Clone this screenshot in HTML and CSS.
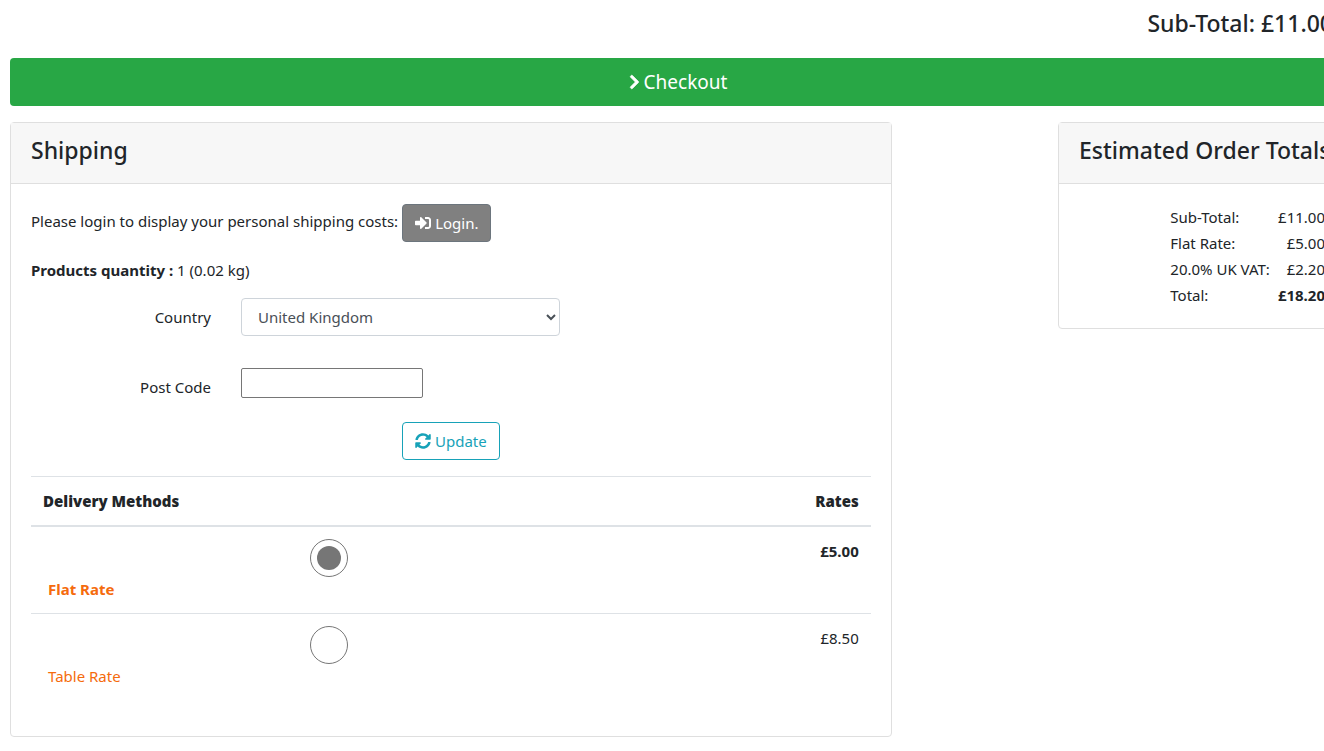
FILE: index.html
```
<!DOCTYPE html>
<html lang="en">
<head>
    <meta charset="utf-8">
    <title>Shopping Cart</title>
    <link rel="stylesheet" href="styles.css">
</head>
<body>
    <div class="cart">
        <h4 class="subtotal">Sub-Total: £11.00</h4>
        <a href="#checkout" class="btn btn-success">
            <svg class="icon" width="11" height="16" viewBox="0 0 320 512" aria-hidden="true"><path fill="currentColor" stroke="currentColor" stroke-width="24" d="M285.476 272.971L91.132 467.314c-9.373 9.373-24.569 9.373-33.941 0l-22.667-22.667c-9.357-9.357-9.375-24.522-.04-33.901L188.505 256 34.484 101.255c-9.335-9.379-9.317-24.544.04-33.901l22.667-22.667c9.373-9.373 24.569-9.373 33.941 0L285.475 239.03c9.373 9.372 9.373 24.568.001 33.941z"/></svg>
            Checkout
        </a>

        <div class="row">
            <!-- Shipping estimator -->
            <div class="card shipping">
                <div class="card-header"><h4>Shipping</h4></div>
                <div class="card-body">
                    <div class="login">
                        <span>Please login to display your personal shipping costs:</span>
                        <a href="#login" class="btn btn-secondary">
                            <svg class="icon" width="16" height="16" viewBox="0 0 512 512" aria-hidden="true"><path fill="currentColor" d="M416 448h-84c-6.600 0-12-5.400-12-12v-40c0-6.600 5.400-12 12-12h84c17.700 0 32-14.300 32-32V160c0-17.700-14.300-32-32-32h-84c-6.600 0-12-5.400-12-12V76c0-6.600 5.400-12 12-12h84c53 0 96 43 96 96v192c0 53-43 96-96 96zm-47-209L201 71c-15-15-41-4.500-41 17v96H24c-13.300 0-24 10.700-24 24v96c0 13.300 10.700 24 24 24h136v96c0 21.500 26 32 41 17l168-168c9.300-9.400 9.300-24.600 0-34z"/></svg>
                            Login.
                        </a>
                    </div>
                    <p class="quantity"><strong>Products quantity :</strong> 1 (0.02 kg)</p>

                    <form class="estimator">
                        <div class="form-row">
                            <label for="country">Country</label>
                            <select id="country" name="country" class="form-control">
                                <option selected>United Kingdom</option>
                            </select>
                        </div>
                        <div class="form-row">
                            <label for="postcode">Post Code</label>
                            <input type="text" id="postcode" name="postcode" class="postcode">
                        </div>
                        <button type="button" class="btn btn-info">
                            <svg class="icon" width="16" height="16" viewBox="0 0 512 512" aria-hidden="true"><path fill="currentColor" d="M370.720 133.280C339.458 104.008 298.888 87.962 255.848 88c-77.458.068-144.328 53.178-162.791 126.850-1.344 5.363-6.122 9.150-11.651 9.150H24.103c-7.498 0-13.194-6.807-11.807-14.176C33.933 94.924 134.813 8 256 8c66.448 0 126.791 26.136 171.315 68.685L463.030 40.970C478.149 25.851 504 36.559 504 57.941V192c0 13.255-10.745 24-24 24H345.941c-21.382 0-32.090-25.851-16.971-40.971l41.750-41.749zM32 296h134.059c21.382 0 32.090 25.851 16.971 40.971l-41.750 41.750c31.262 29.273 71.835 45.319 114.876 45.280 77.418-.07 144.315-53.144 162.787-126.849 1.344-5.363 6.122-9.150 11.651-9.150h57.304c7.498 0 13.194 6.807 11.807 14.176C478.067 417.076 377.187 504 256 504c-66.448 0-126.791-26.136-171.315-68.685L48.970 471.030C33.851 486.149 8 475.441 8 454.059V320c0-13.255 10.745-24 24-24z"/></svg>
                            Update
                        </button>
                    </form>

                    <table class="methods">
                        <thead>
                            <tr><th scope="col">Delivery Methods</th><th scope="col">Rates</th></tr>
                        </thead>
                        <tbody>
                            <tr class="selected">
                                <td>
                                    <input type="radio" id="flat" name="method" checked>
                                    <label for="flat">Flat Rate</label>
                                </td>
                                <td>£5.00</td>
                            </tr>
                            <tr>
                                <td>
                                    <input type="radio" id="table" name="method">
                                    <label for="table">Table Rate</label>
                                </td>
                                <td>£8.50</td>
                            </tr>
                        </tbody>
                    </table>
                </div>
            </div>

            <!-- Order totals -->
            <div class="card totals">
                <div class="card-header"><h4>Estimated Order Totals</h4></div>
                <div class="card-body">
                    <table>
                        <tr><td>Sub-Total:</td><td>£11.00</td></tr>
                        <tr><td>Flat Rate:</td><td>£5.00</td></tr>
                        <tr><td>20.0% UK VAT:</td><td>£2.20</td></tr>
                        <tr><td>Total:</td><td><strong>£18.20</strong></td></tr>
                    </table>
                </div>
            </div>
        </div>
    </div>
</body>
</html>
```
FILE: styles.css
```
* {
    box-sizing: border-box;
}

body {
    margin: 0;
    font-family: "Noto Sans", "Open Sans", sans-serif;
    font-size: 15px;
    line-height: 24px;
    color: #212529;
    background-color: #fff;
    overflow-x: hidden;
}

/* The cart is a little wider than the window and runs off to the right */
.cart {
    margin: 0 -22px 0 10px;
    padding-top: 9px;
}

h4 {
    margin: 0 0 8px;
    font-size: 23px;
    font-weight: 500;
    line-height: 29px;
    white-space: nowrap;
}

.subtotal {
    margin: 0 13px 20px;
    text-align: right;
}

.icon {
    flex: none;
}

.btn {
    display: inline-flex;
    align-items: center;
    justify-content: center;
    gap: 4px;
    height: 38px;
    padding: 0 12px;
    border: 1px solid transparent;
    border-radius: 4px;
    font-family: inherit;
    font-size: 15px;
    text-decoration: none;
    cursor: pointer;
}

.btn-success {
    display: flex;
    height: 48px;
    margin-bottom: 16px;
    color: #fff;
    background-color: #28a745;
    font-size: 19px;
}

.btn-secondary {
    color: #fff;
    background-color: #808080;
    border-color: #6c757d;
}

.btn-info {
    color: #17a2b8;
    background-color: #fff;
    border-color: #17a2b8;
}

.row {
    display: flex;
    align-items: flex-start;
    justify-content: space-between;
}

.card {
    border: 1px solid #dfdfdf;
    border-radius: 4px;
}

.card-header {
    padding: 13px 20px 10px;
    background-color: #f7f7f7;
    border-bottom: 1px solid #dfdfdf;
}

.card-body {
    padding: 20px;
}

.shipping {
    width: 66%;
}

.totals {
    width: 288px;
}

.login {
    display: flex;
    gap: 4px;
}

.login span {
    padding-top: 5px;
}

.quantity {
    margin: 16px 0;
}

.form-row {
    display: grid;
    grid-template-columns: 180px 38%;
    column-gap: 30px;
    align-items: start;
    margin-bottom: 32px;
}

.form-row label {
    padding-top: 7px;
    text-align: right;
}

.form-control {
    height: 38px;
    padding: 6px 12px;
    border: 1px solid #ced4da;
    border-radius: 4px;
    color: #495057;
    background-color: #fff;
    font-family: inherit;
    font-size: 15px;
}

.postcode {
    width: 182px;
    height: 30px;
    border: 1px solid #767676;
    border-radius: 2px;
    font-family: inherit;
    font-size: 15px;
}

.estimator {
    text-align: center;
    margin-bottom: 16px;
}

.estimator .form-row:nth-child(2) {
    margin-bottom: 23px;
}

.estimator .btn {
    vertical-align: top;
}

.methods {
    width: 100%;
    margin-bottom: 16px;
    border-collapse: collapse;
}

.methods th,
.methods td {
    padding: 12px;
    border-top: 1px solid #dee2e6;
    text-align: left;
    vertical-align: top;
}

.methods th {
    border-bottom: 2px solid #dee2e6;
    font-family: "Open Sans", "Noto Sans", sans-serif;
    font-weight: 800;
}

.methods th:first-child {
    width: 71%;
}

.methods th:last-child,
.methods td:last-child {
    text-align: right;
}

.methods label {
    display: block;
    padding-left: 5px;
    color: #f56b0d;
}

.methods .selected {
    font-weight: 700;
}

.methods input {
    display: grid;
    place-items: center;
    width: 38px;
    height: 38px;
    margin: 0 auto;
    appearance: none;
    border: 1px solid #767676;
    border-radius: 50%;
}

.methods input:checked::before {
    content: "";
    width: 24px;
    height: 24px;
    border-radius: 50%;
    background-color: #767676;
}

.totals table {
    margin-left: auto;
    border-collapse: collapse;
}

.totals td {
    padding: 1px 0;
}

.totals td:last-child {
    padding-left: 8px;
    text-align: right;
}
```
